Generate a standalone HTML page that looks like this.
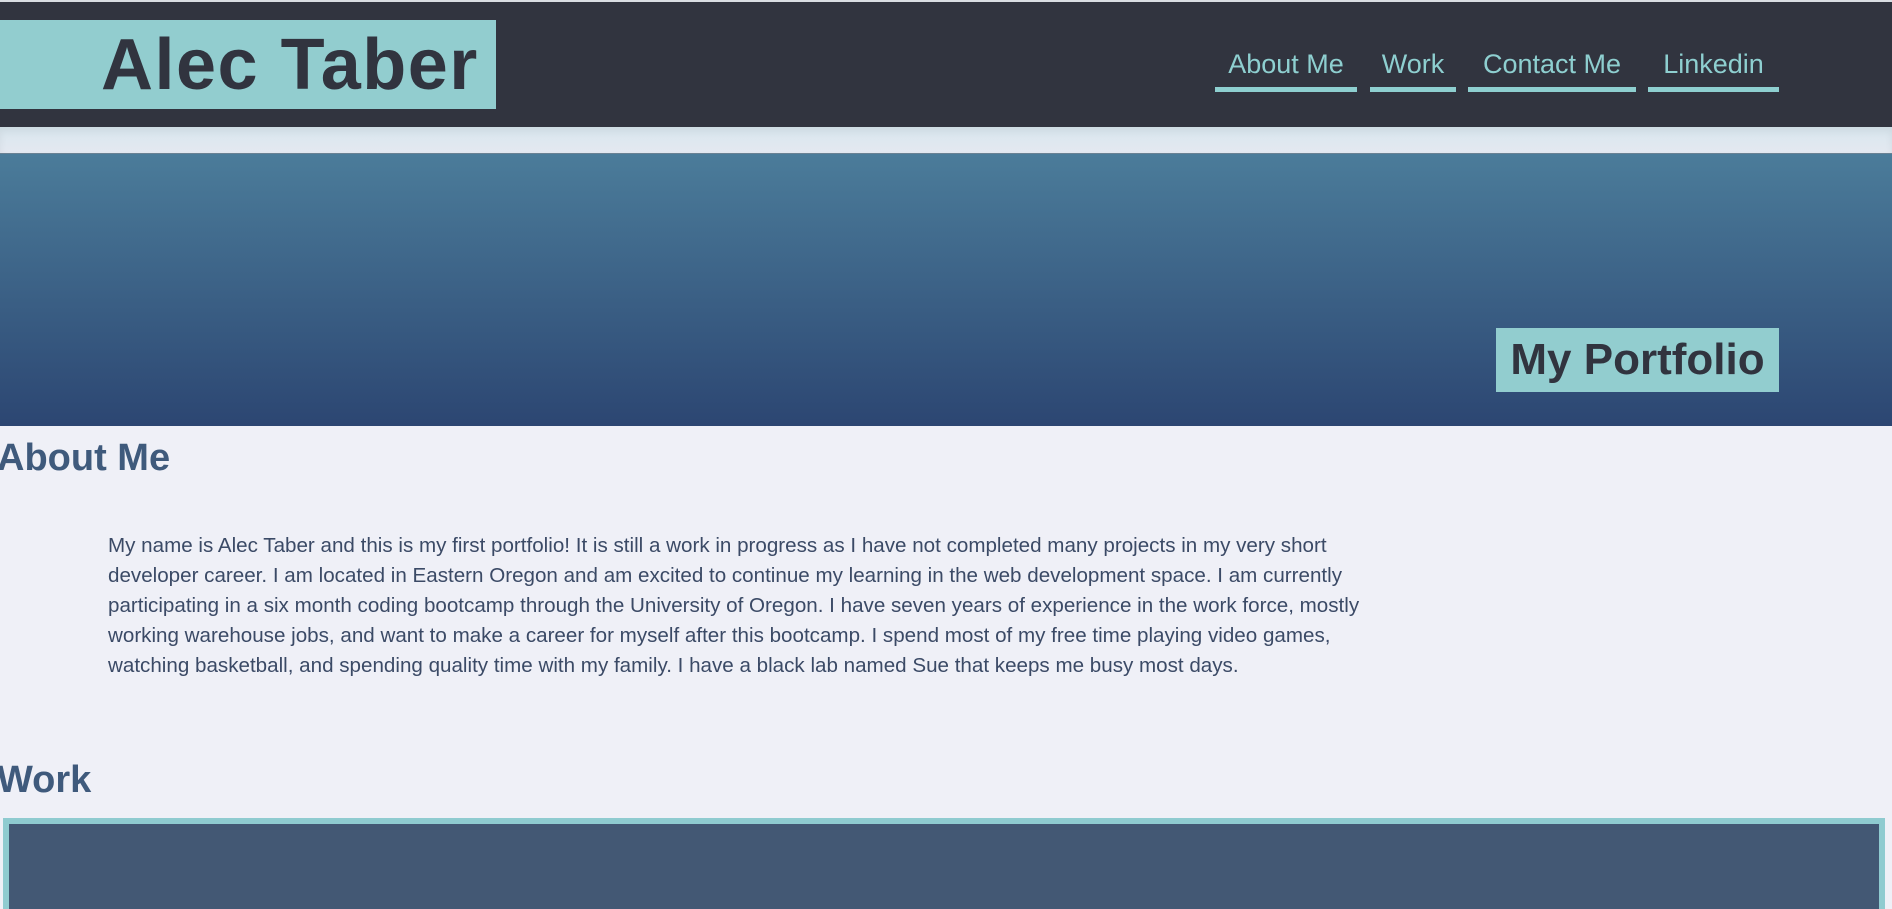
<!DOCTYPE html>
<html><head><meta charset="utf-8"><style>
*{margin:0;padding:0;box-sizing:border-box}
html,body{width:1892px;height:909px;overflow:hidden;background:#eff0f7;font-family:"Liberation Sans",sans-serif;position:relative}
.topline{position:absolute;left:0;top:0;width:1892px;height:2px;background:#d9dde2}
header{position:absolute;left:0;top:2px;width:1892px;height:125px;background:#31343f}
.logo{position:absolute;left:0;top:18px;width:496px;height:89px;background:#92cdcf}
.logo span{position:absolute;left:101px;top:5px;font-size:72px;font-weight:bold;color:#31343f;line-height:80px;letter-spacing:1.5px}
.nav a{position:absolute;top:45px;font-size:27px;color:#8ecfd0;text-decoration:none;text-align:center;height:45px;border-bottom:5px solid #8ecfd0;line-height:34px}
.gap{position:absolute;left:0;top:127px;width:1892px;height:26px;background:linear-gradient(#d8e6ee,#e4e9f1);box-shadow:inset 0 4px 8px rgba(0,0,0,.06)}
.hero{position:absolute;left:0;top:153px;width:1892px;height:273px;background:linear-gradient(#4b7c9a,#2c4672);border-top:1px solid #6a8294}
.pf{position:absolute;left:1496px;top:328px;width:283px;height:64px;background:#92cdcf;color:#31343f;font-weight:bold;font-size:44px;line-height:64px;text-align:center}
h2{position:absolute;left:-3px;font-size:38px;color:#3f5a7c;font-weight:bold}
p{position:absolute;left:108px;top:531px;font-size:20.6px;line-height:30px;color:#3b4a66;white-space:nowrap}
.work{position:absolute;left:3px;top:818px;width:1882px;height:120px;background:#435874;border:6px solid #8fcbd0;border-bottom:none}
</style></head><body>
<div class="topline"></div>
<header>
<div class="logo"><span>Alec Taber</span></div>
<div class="nav">
<a style="left:1215px;width:142px">About Me</a>
<a style="left:1370px;width:86px">Work</a>
<a style="left:1468px;width:168px">Contact Me</a>
<a style="left:1648px;width:131px">Linkedin</a>
</div>
</header>
<div class="gap"></div>
<div class="hero"></div>
<div class="pf">My Portfolio</div>
<h2 style="top:437px">About Me</h2>
<p>My name is Alec Taber and this is my first portfolio! It is still a work in progress as I have not completed many projects in my very short<br>developer career. I am located in Eastern Oregon and am excited to continue my learning in the web development space. I am currently<br>participating in a six month coding bootcamp through the University of Oregon. I have seven years of experience in the work force, mostly<br>working warehouse jobs, and want to make a career for myself after this bootcamp. I spend most of my free time playing video games,<br>watching basketball, and spending quality time with my family. I have a black lab named Sue that keeps me busy most days.</p>
<h2 style="top:759px">Work</h2>
<div class="work"></div>
</body></html>
